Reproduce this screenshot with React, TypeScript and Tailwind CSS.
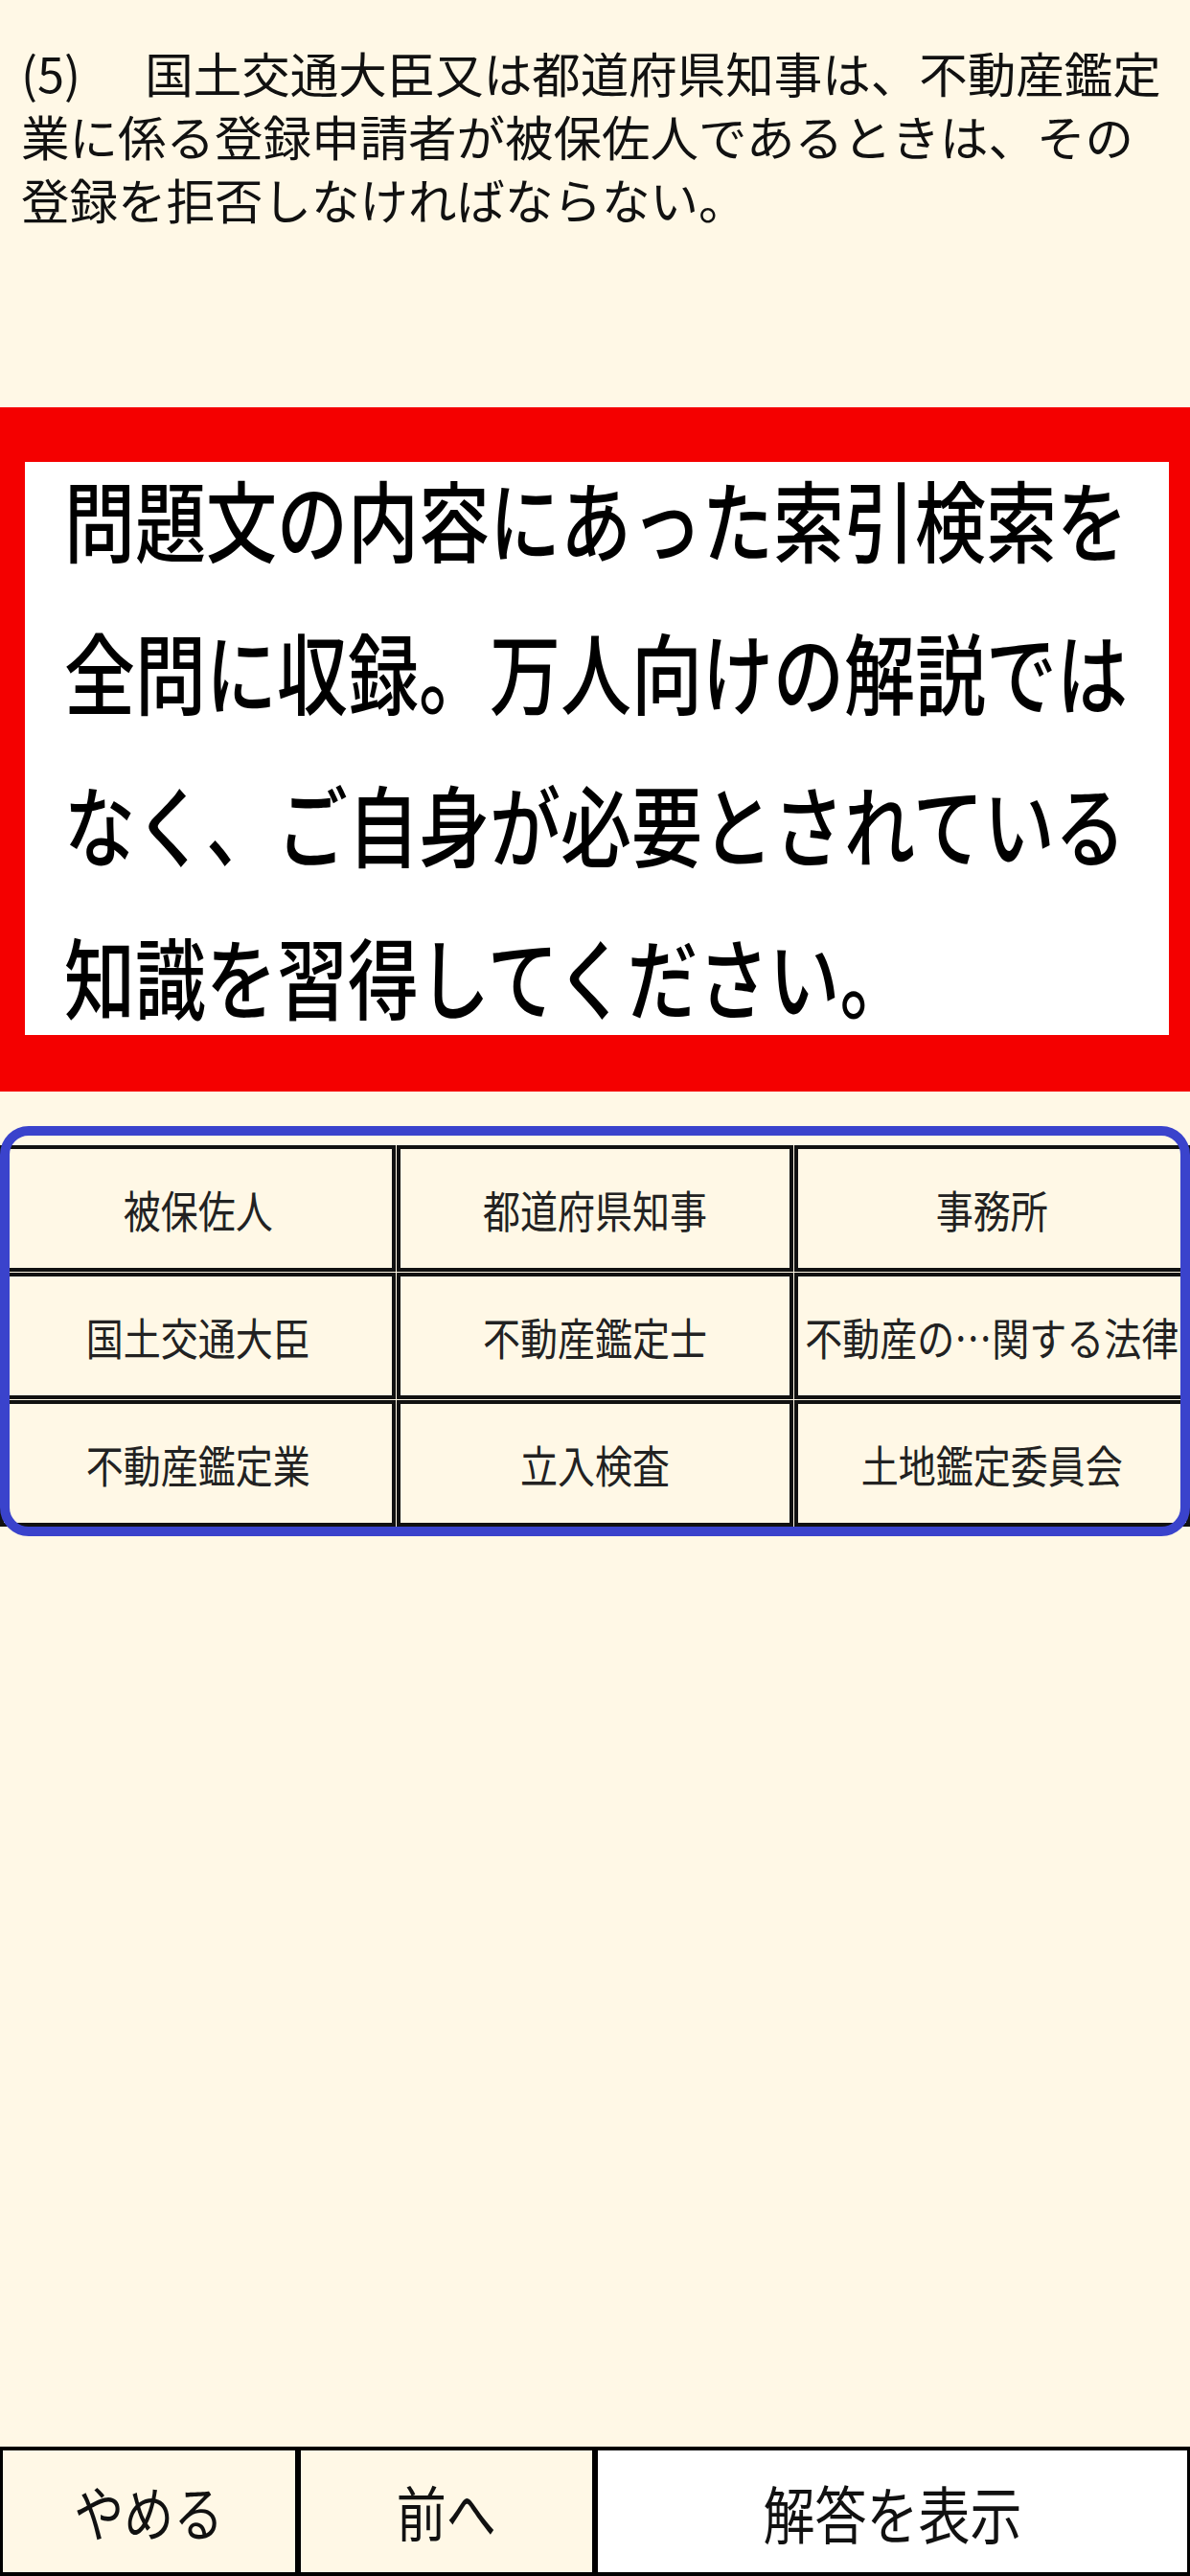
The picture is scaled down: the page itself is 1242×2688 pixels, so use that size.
import React from 'react';

const cells = [
  '被保佐人',
  '都道府県知事',
  '事務所',
  '国土交通大臣',
  '不動産鑑定士',
  '不動産の…関する法律',
  '不動産鑑定業',
  '立入検査',
  '土地鑑定委員会',
];

const bannerLines = [
  '問題文の内容にあった索引検索を',
  '全問に収録。万人向けの解説では',
  'なく、ご自身が必要とされている',
  '知識を習得してください。',
];

export default function App() {
  return (
    <div className="flex h-[2688px] w-[1242px] flex-col overflow-hidden bg-[#fff8e6] text-[#111] [font-family:'Noto_Sans_CJK_JP','Noto_Sans_CJK_SC',sans-serif]">
      {/* Question */}
      <div className="h-[425px] pl-[22px] pr-[20px] pt-[42px] text-[50.5px] leading-[66px]">
        <div className="whitespace-nowrap">
          (5)<span className="inline-block w-[67px]"></span>国土交通大臣又は都道府県知事は、不動産鑑定
        </div>
        <div className="whitespace-nowrap">業に係る登録申請者が被保佐人であるときは、その</div>
        <div className="whitespace-nowrap">登録を拒否しなければならない。</div>
      </div>

      {/* Banner */}
      <div className="h-[714px] bg-[#f40000] pb-[59px] pl-[26px] pr-[22px] pt-[57px]">
        <div className="flex h-full flex-col gap-[79px] bg-white pl-[41px] pt-[18px] text-black">
          {bannerLines.map((l) => (
            <div key={l} className="h-[80px] scale-y-125 whitespace-nowrap text-[74px] font-medium leading-[80px]">
              {l}
            </div>
          ))}
        </div>
      </div>

      {/* Index grid */}
      <div className="relative mt-[36px] h-[428px] pb-[10px] pt-[20px]">
        <div className="grid grid-cols-3 gap-[1px]">
          {cells.map((c) => (
            <div
              key={c}
              className="flex h-[132px] items-center justify-center overflow-hidden border-4 border-[#111] bg-[#fff8e6]"
            >
              <span className="scale-y-[1.18] whitespace-nowrap text-[39px] leading-none text-[#222]">{c}</span>
            </div>
          ))}
        </div>
        <div className="pointer-events-none absolute inset-0 rounded-[30px] border-[10px] border-[#3a43cc]"></div>
      </div>

      <div className="flex-1"></div>

      {/* Bottom bar */}
      <div className="grid h-[135px] grid-cols-4">
        <button className="flex items-center justify-center border-x-[3.5px] border-y-4 border-black bg-[#fff8e6]">
          <span className="scale-y-[1.2] text-[52px] leading-none text-[#111]">やめる</span>
        </button>
        <button className="flex items-center justify-center border-x-[3.5px] border-y-4 border-black bg-[#fff8e6]">
          <span className="scale-y-[1.2] text-[52px] leading-none text-[#111]">前へ</span>
        </button>
        <button className="col-span-2 flex items-center justify-center border-x-[3.5px] border-y-4 border-black bg-white">
          <span className="scale-y-[1.2] text-[54px] leading-none text-[#111]">解答を表示</span>
        </button>
      </div>
    </div>
  );
}
